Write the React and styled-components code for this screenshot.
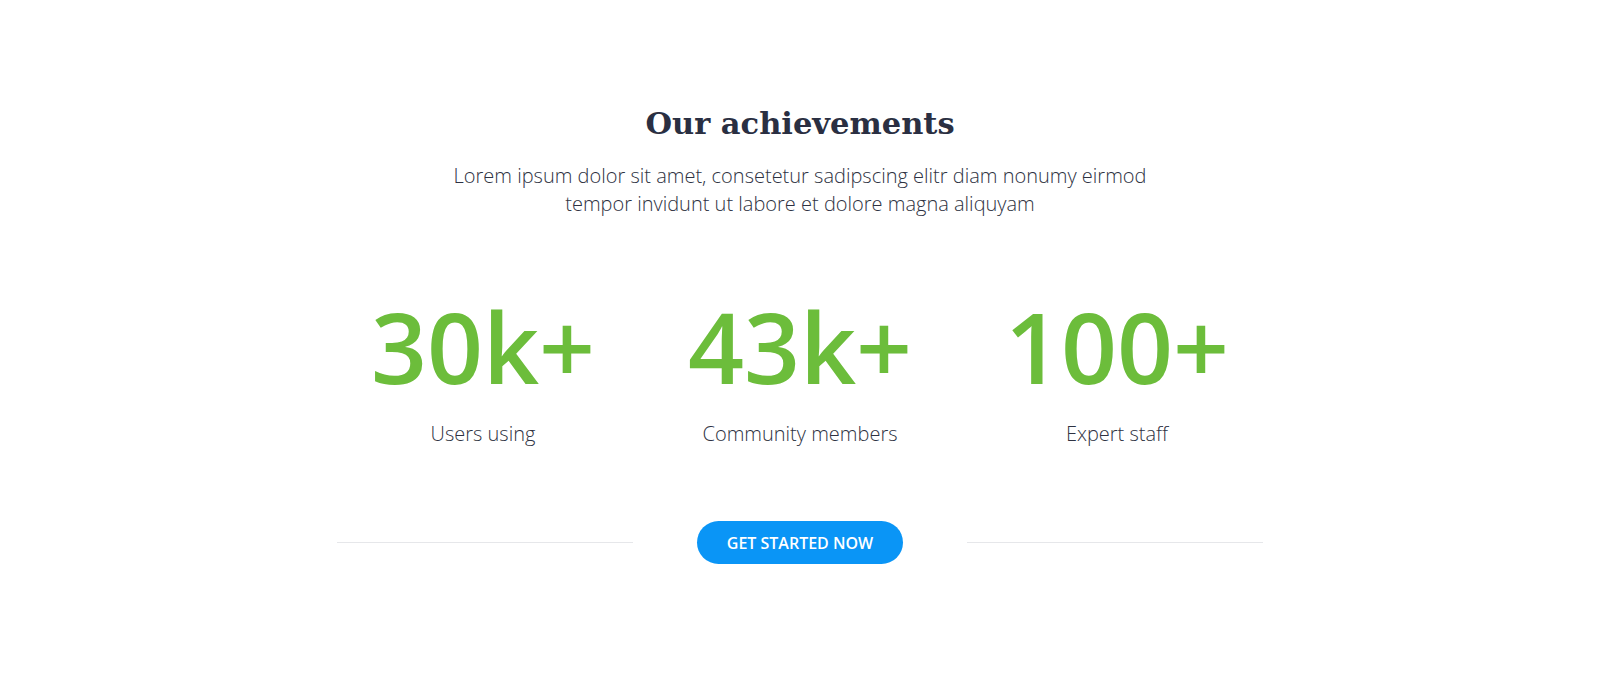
import React from "react";
import styled, { createGlobalStyle } from "styled-components";

const GlobalStyle = createGlobalStyle`
  html, body { margin: 0; padding: 0; background: #ffffff; }
  body { font-family: "Open Sans", "Liberation Sans", sans-serif; }
  * { box-sizing: border-box; }
`;

const Section = styled.section`
  display: flex;
  flex-direction: column;
  align-items: center;
  padding: 103px 0 100px;
  background: #ffffff;
`;

const Title = styled.h2`
  margin: 0;
  font-family: "DejaVu Serif", serif;
  font-weight: 700;
  font-size: 30.5px;
  line-height: 40px;
  color: #2a2f42;
  letter-spacing: 0;
`;

const Lead = styled.p`
  margin: 19px 0 0;
  max-width: 760px;
  text-align: center;
  font-family: "Open Sans", sans-serif;
  font-weight: 300;
  font-size: 20px;
  line-height: 28px;
  color: #2e3242;
`;

const Stats = styled.div`
  display: grid;
  grid-template-columns: repeat(3, 317px);
  margin-top: 79px;
`;

const Stat = styled.div`
  display: flex;
  flex-direction: column;
  align-items: center;
`;

const Value = styled.div`
  font-family: "Open Sans", sans-serif;
  font-weight: 600;
  font-size: 98px;
  line-height: 98px;
  color: #6cbd3b;
`;

const Label = styled.div`
  margin-top: 25px;
  font-family: "Open Sans", sans-serif;
  font-weight: 300;
  font-size: 20px;
  line-height: 28px;
  color: #2e3242;
`;

const CtaRow = styled.div`
  display: grid;
  grid-template-columns: 296px auto 296px;
  column-gap: 64px;
  align-items: center;
  margin-top: 73px;
`;

const Rule = styled.hr`
  margin: 0;
  border: 0;
  height: 1px;
  background: #e6e7ea;
`;

const Button = styled.button`
  height: 43px;
  padding: 0 30px;
  border: 0;
  border-radius: 22px;
  background: #0a95f6;
  color: #ffffff;
  font-family: "Open Sans", sans-serif;
  font-weight: 600;
  font-size: 16px;
  letter-spacing: 0;
  cursor: pointer;
`;

const stats = [
  { value: "30k+", label: "Users using" },
  { value: "43k+", label: "Community members" },
  { value: "100+", label: "Expert staff" },
];

export default function App() {
  return (
    <>
      <GlobalStyle />
      <Section>
        <Title>Our achievements</Title>
        <Lead>
          Lorem ipsum dolor sit amet, consetetur sadipscing elitr diam nonumy eirmod
          <br />
          tempor invidunt ut labore et dolore magna aliquyam
        </Lead>
        <Stats>
          {stats.map((s) => (
            <Stat key={s.label}>
              <Value>{s.value}</Value>
              <Label>{s.label}</Label>
            </Stat>
          ))}
        </Stats>
        <CtaRow>
          <Rule />
          <Button>GET STARTED NOW</Button>
          <Rule />
        </CtaRow>
      </Section>
    </>
  );
}
